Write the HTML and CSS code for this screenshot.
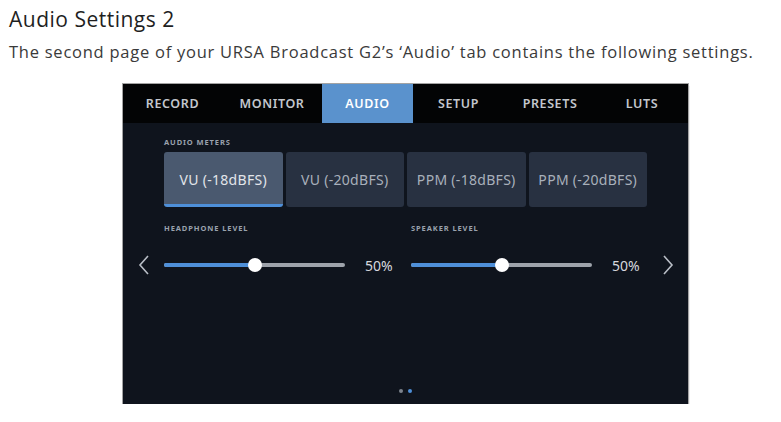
FILE: index.html
```html
<!DOCTYPE html>
<html lang="en">
  <head>
    <meta charset="UTF-8" />
    <meta name="viewport" content="width=device-width, initial-scale=1.0" />
    <title>Audio Settings 2</title>
    <link rel="stylesheet" href="styles.css">
  </head>
  <body>
    <h1 class="title">Audio Settings 2</h1>
    <p class="intro">The second page of your URSA Broadcast G2’s ‘Audio’ tab contains the following settings.</p>

    <div class="screen">
      <div class="tabs">
        <div class="tab t1">RECORD</div>
        <div class="tab t2">MONITOR</div>
        <div class="tab t3 active">AUDIO</div>
        <div class="tab t4">SETUP</div>
        <div class="tab t5">PRESETS</div>
        <div class="tab t6">LUTS</div>
      </div>

      <div class="content">
        <div class="label meters-label">AUDIO METERS</div>
        <div class="meters">
          <div class="meter selected">VU (-18dBFS)</div>
          <div class="meter">VU (-20dBFS)</div>
          <div class="meter">PPM (-18dBFS)</div>
          <div class="meter">PPM (-20dBFS)</div>
        </div>

        <div class="level-labels">
          <div class="label level-label">HEADPHONE LEVEL</div>
          <div class="label level-label">SPEAKER LEVEL</div>
        </div>

        <div class="levels">
          <div class="arrow">
            <svg width="12" height="20" viewBox="0 0 12 20"><path d="M10 1 L2 10 L10 19" fill="none" stroke="#b9bec6" stroke-width="1.6"/></svg>
          </div>
          <div class="level">
            <div class="track">
              <div class="fill" style="width: 50%"></div>
              <div class="thumb" style="left: 50%"></div>
            </div>
            <span class="value">50%</span>
          </div>
          <div class="level">
            <div class="track">
              <div class="fill" style="width: 50%"></div>
              <div class="thumb" style="left: 50%"></div>
            </div>
            <span class="value">50%</span>
          </div>
          <div class="arrow next">
            <svg width="12" height="20" viewBox="0 0 12 20"><path d="M2 1 L10 10 L2 19" fill="none" stroke="#b9bec6" stroke-width="1.6"/></svg>
          </div>
        </div>

        <div class="dots">
          <span class="dot"></span>
          <span class="dot on"></span>
        </div>
      </div>
    </div>
  </body>
</html>
```

FILE: styles.css
```css
body {
  margin: 0;
  padding: 0 0 0 9px;
  background-color: #fff;
  font-family: "Open Sans", Arial, sans-serif;
}
.title {
  margin: 7px 0 0 0;
  font-size: 21px;
  line-height: 24px;
  font-weight: 400;
  letter-spacing: 0.5px;
  color: #1f1f1f;
}
.intro {
  margin: 11px 0 0 0;
  font-size: 16.5px;
  line-height: 20px;
  letter-spacing: 0.75px;
  color: #3a3a3a;
}
.screen {
  margin: 22px 0 0 114px;
  width: 565px;
  height: 320px;
  display: flex;
  flex-direction: column;
  background-color: #0f141d;
  box-shadow: 0 0 0 1px #a3a3a3, 1px 2px 1px #9a9a9a;
  font-family: "Noto Sans", Arial, sans-serif;
}
.tabs {
  display: flex;
  height: 39px;
  background-color: #030405;
}
.tab {
  display: flex;
  align-items: center;
  justify-content: center;
  font-size: 12.5px;
  font-weight: 600;
  letter-spacing: 0.6px;
  color: #c3c7cd;
}
.t1 { width: 99px; }
.t2 { width: 100px; }
.t3 { width: 91px; }
.t4 { width: 91px; }
.t5 { width: 92px; }
.t6 { width: 92px; }
.tab.active {
  background-color: #5a92cd;
  color: #fff;
}
.content {
  flex: 1;
  display: flex;
  flex-direction: column;
  padding: 0 13px;
}
.label {
  font-size: 7.5px;
  line-height: 10px;
  font-weight: 700;
  letter-spacing: 0.9px;
  color: #9aa2ad;
}
.meters-label {
  margin: 14px 0 0 28px;
}
.meters {
  display: flex;
  gap: 3px;
  margin: 5px 0 0 28px;
}
.meter {
  width: 118.5px;
  height: 55px;
  box-sizing: border-box;
  display: flex;
  align-items: center;
  justify-content: center;
  border-radius: 3px;
  background-color: #283141;
  color: #a8b0bb;
  font-size: 14px;
  letter-spacing: 0.3px;
}
.meter.selected {
  background-color: #4a596f;
  color: #e2e5ea;
  border-bottom: 3px solid #4e8fd8;
  padding-top: 3px;
}
.level-labels {
  display: flex;
  margin: 16px 0 0 28px;
}
.level-label {
  width: 247px;
}
.levels {
  display: flex;
  align-items: center;
  height: 20px;
  margin-top: 22px;
}
.arrow {
  width: 28px;
  flex-shrink: 0;
  display: flex;
  justify-content: flex-start;
  padding-left: 2px;
  box-sizing: border-box;
}
.arrow.next {
  width: 12px;
  padding-left: 0;
  margin-left: 22px;
}
.level {
  width: 229px;
  flex-shrink: 0;
  display: flex;
  align-items: center;
  margin-right: 18px;
}
.level:nth-child(3) {
  margin-right: 0;
}
.track {
  position: relative;
  width: 181px;
  height: 4px;
  border-radius: 2px;
  background-color: #9ea3ab;
}
.fill {
  height: 4px;
  border-radius: 2px;
  background-color: #4e8fd8;
}
.thumb {
  position: absolute;
  top: -5px;
  width: 14px;
  height: 14px;
  margin-left: -7px;
  border-radius: 50%;
  background-color: #fff;
}
.value {
  margin-left: 20px;
  font-size: 14px;
  color: #d6d9de;
}
.dots {
  margin: auto 0 11px 0;
  display: flex;
  justify-content: center;
  gap: 5px;
}
.dot {
  width: 4px;
  height: 4px;
  border-radius: 50%;
  background-color: #7d838d;
}
.dot.on {
  background-color: #4e8fd8;
}
```
